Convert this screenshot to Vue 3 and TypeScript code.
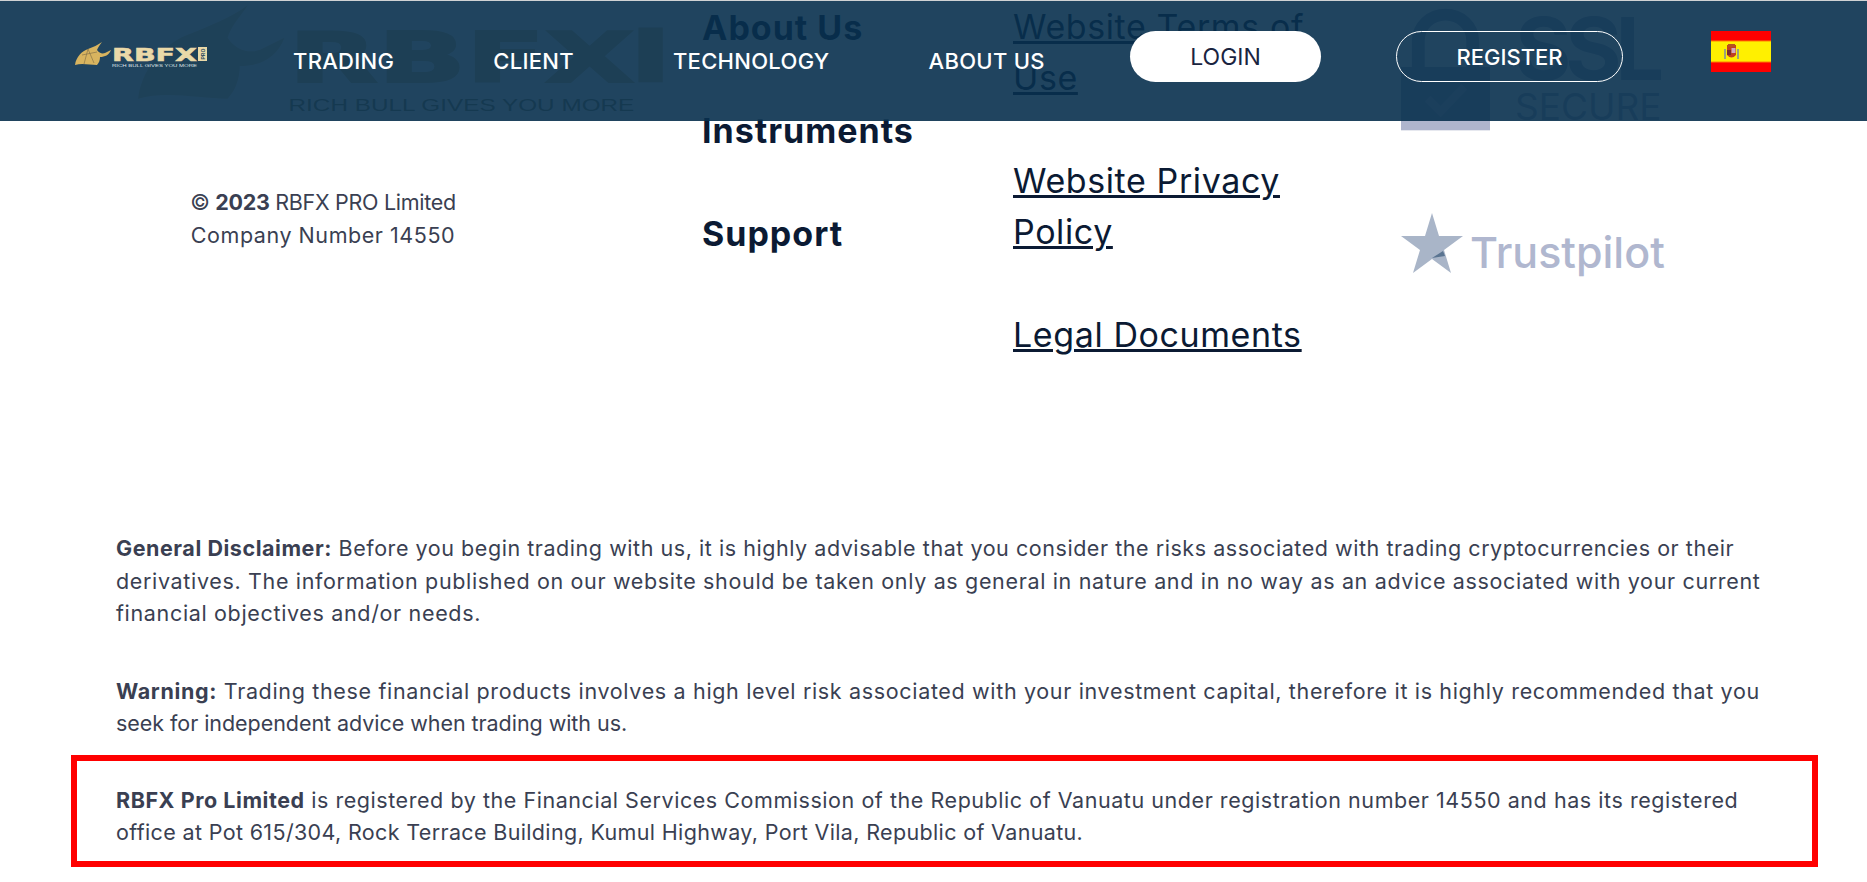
<template>
  <div class="page">
    <header class="topbar">
      <svg class="logo" viewBox="0 0 133 27">
        <path :d="bullPath" fill="#d8b45f" />
        <path d="M14 7L10 22M14 7L20 21M8 13L23 10" fill="none" stroke="#7a6a45" stroke-width="0.6" />
        <text x="38" y="19" class="logo-name" textLength="85" lengthAdjust="spacingAndGlyphs">RBFX</text>
        <rect x="124" y="5" width="9" height="14" fill="#ead9a8" />
        <text x="0" y="0" class="logo-pro" transform="translate(131 17.500) rotate(-90)">PRO</text>
        <text x="38" y="25" class="logo-tag" textLength="85" lengthAdjust="spacingAndGlyphs">RICH BULL GIVES YOU MORE</text>
      </svg>
      <nav class="nav">
        <a v-for="item in navItems" :key="item" class="nav-link">{{ item }}</a>
      </nav>
      <button class="btn btn-login">LOGIN</button>
      <button class="btn btn-register">REGISTER</button>
      <svg class="flag" viewBox="0 0 60 41">
        <rect width="60" height="41" fill="#ff0000" />
        <rect y="10" width="60" height="21" fill="#fff000" />
        <rect y="9.500" width="60" height="1" fill="#ff8000" />
        <rect y="30.500" width="60" height="1" fill="#ff8000" />
        <rect x="13" y="18" width="2" height="10" fill="#9aa37c" />
        <rect x="26" y="18" width="2" height="10" fill="#9aa37c" />
        <path d="M16 14h9v10q-4.500 5-9 0z" fill="#c0401f" />
        <rect x="20.500" y="17" width="4" height="5" fill="#d0a8c0" />
        <rect x="16" y="19" width="4" height="5" fill="#7a2b2b" />
        <rect x="17" y="13" width="7" height="3" fill="#b5521f" />
      </svg>
    </header>

    <section class="footer-top">
      <div class="brand-col">
        <svg class="brand-logo" viewBox="0 0 133 27">
          <path :d="bullPath" fill="#ecdcb4" />
          <text x="38" y="19" class="logo-name" textLength="85" lengthAdjust="spacingAndGlyphs">RBFX</text>
          <rect x="124" y="5.500" width="6" height="13.500" fill="#dcc99a" />
          <text x="38" y="26" class="logo-tag" textLength="85" lengthAdjust="spacingAndGlyphs">RICH BULL GIVES YOU MORE</text>
        </svg>
        <p class="copyright"><span class="tight">© <b>2023</b> RBFX PRO Limited</span><br />Company Number 14550</p>
      </div>
      <div class="menu-col">
        <a v-for="item in menuItems" :key="item" class="menu-link">{{ item }}</a>
      </div>
      <div class="legal-col">
        <a v-for="item in legalItems" :key="item" class="legal-link" v-html="item"></a>
      </div>
      <div class="badge-col">
        <div class="ssl">
          <svg class="lock" viewBox="0 0 90 124">
            <path d="M11 62V33a34 32 0 0 1 68 0v29H66V33a21 20 0 0 0-42 0v29z" fill="#aeb5cd" />
            <rect y="60" width="90" height="64" fill="#aeb5cd" />
            <path d="M27 92l13 13 24-25" fill="none" stroke="#c8cede" stroke-width="8" />
          </svg>
          <div class="ssl-text">
            <span class="ssl-big">SSL</span>
            <span class="ssl-small">SECURE</span>
          </div>
        </div>
        <div class="trust">
          <svg class="star" viewBox="0 0 62 60">
            <path d="M31 0l7 23h24L43 37l7 23-19-14-19 14 7-23L0 23h24z" fill="#a9b5c8" />
            <path d="M31 45L42 38 44 43z" fill="#5a7491" />
          </svg>
          <span class="trust-name">Trustpilot</span>
        </div>
      </div>
    </section>

    <section class="legal-text">
      <p><b>General Disclaimer:</b> Before you begin trading with us, it is highly advisable that you consider the risks associated with trading cryptocurrencies or their<br /><span class="wider">derivatives. The information published on our website should be taken only as general in nature and in no way as an advice associated with your current</span><br /><span class="wider">financial objectives and/or needs.</span></p>
      <p class="warning"><span class="wider"><b>Warning:</b> Trading these financial products involves a high level risk associated with your investment capital, therefore it is highly recommended that you</span><br /><span class="tight">seek for independent advice when trading with us.</span></p>
      <div class="reg-box">
        <p><b>RBFX Pro Limited</b> is registered by the Financial Services Commission of the Republic of Vanuatu under registration number 14550 and has its registered<br /><span class="narrow">office at Pot 615/304, Rock Terrace Building, Kumul Highway, Port Vila, Republic of Vanuatu.</span></p>
      </div>
    </section>
  </div>
</template>

<script setup lang="ts">
const navItems: string[] = ['TRADING', 'CLIENT', 'TECHNOLOGY', 'ABOUT US']
const menuItems: string[] = ['About Us', 'Instruments', 'Support']
const legalItems: string[] = ['Website Terms of<br>Use', 'Website Privacy<br>Policy', 'Legal Documents']

// bull head, drawn in the logo's 133x27 box
const bullPath =
  'M1 23C2 15 8 9 14 7C19 5 24 3 28 0C26 3 24 5 23 8C25 11 28 12 31 11C33 10 35 9 37 8C35 13 31 15 26 15C26 18 25 21 23 23C16 23 8 21 1 23Z'
</script>

<style scoped>
.page {
  width: 1867px;
  height: 882px;
  overflow: hidden;
  position: relative;
  background: #fff;
  font-family: Inter, "Liberation Sans", sans-serif;
  color: #0b1a33;
}

/* sticky header over the scrolled footer */
.topbar {
  position: absolute;
  top: 0;
  left: 0;
  right: 0;
  height: 121px;
  z-index: 5;
  box-sizing: border-box;
  border-top: 1px solid #cfd2d4;
  padding: 30px 0 0 74px;
  display: flex;
  align-items: flex-start;
  background: rgba(8, 48, 78, 0.9);
}
.logo {
  width: 133px;
  height: 27px;
  margin-top: 11px;
  flex: none;
}
.logo-name {
  font-family: "DejaVu Sans", sans-serif;
  font-weight: 700;
  font-size: 17px;
  fill: #ead9a8;
  stroke: #ead9a8;
  stroke-width: 0.5px;
}
.logo-pro {
  font-family: "Liberation Sans", sans-serif;
  font-weight: 700;
  font-size: 5px;
  fill: #21455f;
}
.logo-tag {
  font-family: "Liberation Sans", sans-serif;
  font-size: 4px;
  fill: #dfe3e6;
}
.brand-logo .logo-name {
  fill: #dcc99a;
  stroke: #dcc99a;
}
.brand-logo .logo-tag {
  fill: #8f8a6a;
}
.nav {
  display: flex;
  gap: 99px;
  margin-left: 86px;
  padding-top: 15px;
  width: 837px;
  flex: none;
}
.nav-link {
  color: #fff;
  font-size: 22px;
  font-weight: 500;
  letter-spacing: 0.3px;
  line-height: 30px;
  white-space: nowrap;
}
.btn {
  height: 51px;
  border-radius: 26px;
  font-family: inherit;
  box-sizing: border-box;
  flex: none;
}
.btn-login {
  width: 191px;
  background: #fff;
  border: 0;
  color: #1a2440;
  font-size: 23px;
}
.btn-register {
  width: 227px;
  margin-left: 75px;
  background: transparent;
  border: 1px solid #fff;
  color: #fff;
  font-size: 22px;
  font-weight: 500;
}
.flag {
  width: 60px;
  height: 41px;
  margin-left: 88px;
  flex: none;
}

.footer-top {
  display: flex;
  height: 532px;
}
.brand-col {
  width: 702px;
  flex: none;
  box-sizing: border-box;
  padding-top: 5px;
}
.brand-logo {
  display: block;
  width: 541px;
  height: 110px;
  margin-left: 134px;
}
.copyright {
  width: 646px;
  margin: 71px 0 0;
  text-align: center;
  font-size: 21.5px;
  letter-spacing: 0.55px;
  line-height: 33px;
  color: #3a3f52;
}
.copyright .tight {
  letter-spacing: -0.3px;
}
.menu-col {
  width: 311px;
  flex: none;
  display: flex;
  flex-direction: column;
  gap: 52px;
  padding-top: 2px;
}
.menu-link {
  font-size: 34px;
  font-weight: 700;
  letter-spacing: 1px;
  line-height: 51px;
  white-space: nowrap;
}
.legal-col {
  width: 388px;
  flex: none;
  display: flex;
  flex-direction: column;
  gap: 52px;
  padding-top: 1px;
}
.legal-link {
  font-size: 34px;
  letter-spacing: 0.6px;
  line-height: 51px;
  text-decoration: underline;
  text-decoration-thickness: 2.5px;
  white-space: nowrap;
}
.badge-col {
  display: flex;
  flex-direction: column;
  padding-top: 7px;
}
.ssl {
  display: flex;
  gap: 25px;
}
.lock {
  width: 89px;
  height: 124px;
  flex: none;
}
.ssl-text {
  display: flex;
  flex-direction: column;
  color: #aeb5cd;
  padding-top: 4px;
}
.ssl-big {
  font-size: 86px;
  font-weight: 700;
  letter-spacing: -6px;
  line-height: 76px;
}
.ssl-small {
  font-size: 37px;
  line-height: 40px;
}
.trust {
  display: flex;
  align-items: flex-end;
  gap: 7px;
  margin-top: 82px;
}
.star {
  width: 62px;
  height: 60px;
  flex: none;
}
.trust-name {
  font-size: 43px;
  font-weight: 500;
  line-height: 44px;
  margin-bottom: -1px;
  color: #b0b7cf;
}

.legal-text {
  padding: 0 49px 0 71px;
  font-size: 21.5px;
  letter-spacing: 0.55px;
  line-height: 32.5px;
  color: #3a3f52;
}
.legal-text p {
  margin: 0 0 45px 45px;
  white-space: nowrap;
}
.legal-text .warning {
  margin-bottom: 15px;
}
.legal-text .wider {
  letter-spacing: 0.66px;
}
.legal-text .narrow {
  letter-spacing: 0.35px;
}
.legal-text .tight {
  letter-spacing: -0.05px;
}
.legal-text .reg-box {
  box-sizing: border-box;
  height: 112px;
  padding-top: 23px;
  border: 6px solid #ff0000;
}
.legal-text .reg-box p {
  margin: 0 0 0 39px;
}
</style>
